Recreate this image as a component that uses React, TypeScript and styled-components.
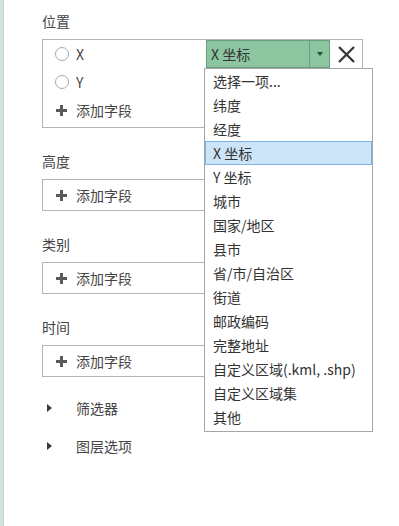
import * as React from 'react';
import styled, { createGlobalStyle } from 'styled-components';

const GlobalStyle = createGlobalStyle`
  html, body {
    margin: 0;
    padding: 0;
    background: #ffffff;
  }
  body {
    font-family: "Noto Sans CJK SC", "Liberation Sans", sans-serif;
    color: #444;
  }
`;

const OPTIONS = [
  '选择一项...',
  '纬度',
  '经度',
  'X 坐标',
  'Y 坐标',
  '城市',
  '国家/地区',
  '县市',
  '省/市/自治区',
  '街道',
  '邮政编码',
  '完整地址',
  '自定义区域(.kml, .shp)',
  '自定义区域集',
  '其他',
];

function PlusIcon() {
  return (
    <svg width="11" height="11" viewBox="0 0 11 11">
      <rect x="4" y="0" width="3" height="11" fill="#5a5a5a" />
      <rect x="0" y="4" width="11" height="3" fill="#5a5a5a" />
    </svg>
  );
}

function CloseIcon() {
  return (
    <svg width="19" height="19" viewBox="0 0 19 19">
      <path d="M2 2 L17 17 M17 2 L2 17" stroke="#3a3a3a" strokeWidth="2.4" />
    </svg>
  );
}

function AddRow() {
  return (
    <Row>
      <IconSlot>
        <PlusIcon />
      </IconSlot>
      <RowText>添加字段</RowText>
    </Row>
  );
}

export default function App() {
  return (
    <Page>
      <GlobalStyle />
      <Strip />
      <Panel>
        <Section>
          <Label>位置</Label>
          <Box>
            <Row>
              <IconSlot>
                <Radio />
              </IconSlot>
              <RowText>X</RowText>
              <Spacer />
              <Combo>
                <ComboValue>X 坐标</ComboValue>
                <ComboArrow>
                  <Caret />
                </ComboArrow>
              </Combo>
              <CloseButton>
                <CloseIcon />
              </CloseButton>
              <DropList>
                {OPTIONS.map((o) => (
                  <DropItem key={o} $active={o === 'X 坐标'}>
                    {o}
                  </DropItem>
                ))}
              </DropList>
            </Row>
            <Row>
              <IconSlot>
                <Radio />
              </IconSlot>
              <RowText>Y</RowText>
            </Row>
            <AddRow />
          </Box>
        </Section>

        <Section>
          <Label>高度</Label>
          <Box $single>
            <AddRow />
          </Box>
        </Section>

        <Section>
          <Label>类别</Label>
          <Box $single>
            <AddRow />
          </Box>
        </Section>

        <Section>
          <Label>时间</Label>
          <Box $single>
            <AddRow />
          </Box>
        </Section>

        <Collapsibles>
          <Toggle>
            <Triangle />
            <ToggleText>筛选器</ToggleText>
          </Toggle>
          <Toggle>
            <Triangle />
            <ToggleText>图层选项</ToggleText>
          </Toggle>
        </Collapsibles>
      </Panel>
    </Page>
  );
}

const Page = styled.div`
  display: flex;
  width: 399px;
  height: 526px;
  overflow: hidden;
  background: #ffffff;
`;

const Strip = styled.div`
  width: 3px;
  flex-shrink: 0;
  background: #d3e2dc;
  border-right: 1px solid #c3d5ce;
`;

const Panel = styled.div`
  display: flex;
  flex-direction: column;
  padding: 11px 0 0 38px;
  width: 321px;
`;

const Section = styled.div`
  display: flex;
  flex-direction: column;
  margin-bottom: 23px;
`;

const Label = styled.div`
  font-size: 14px;
  line-height: 20px;
  height: 20px;
  color: #444;
  margin-bottom: 8px;
`;

const Box = styled.div<{ $single?: boolean }>`
  border: 1px solid #b4b4b4;
  display: flex;
  flex-direction: column;
  padding: ${(p) => (p.$single ? '1px 0 1px' : '0 0 3px')};
  background: #fff;
`;

const Row = styled.div`
  position: relative;
  display: flex;
  align-items: center;
  height: 28px;
`;

const IconSlot = styled.div`
  width: 33px;
  display: flex;
  justify-content: center;
  align-items: center;
  padding-left: 4px;
  box-sizing: border-box;
`;

const Radio = styled.span`
  width: 12px;
  height: 12px;
  border-radius: 50%;
  border: 1px solid #a8a8a8;
  background: #fff;
`;

const RowText = styled.span`
  font-size: 14px;
  color: #444;
`;

const Spacer = styled.div`
  flex: 1;
`;

const Combo = styled.div`
  display: flex;
  height: 28px;
  width: 124px;
  box-sizing: border-box;
  border: 1px solid #6a9e7e;
  background: #8cc6a1;
`;

const ComboValue = styled.div`
  flex: 1;
  font-size: 14px;
  line-height: 26px;
  padding-left: 4px;
  color: #333;
`;

const ComboArrow = styled.div`
  width: 19px;
  border-left: 1px solid #6a9e7e;
  display: flex;
  align-items: center;
  justify-content: center;
`;

const Caret = styled.span`
  width: 0;
  height: 0;
  border-left: 3px solid transparent;
  border-right: 3px solid transparent;
  border-top: 4px solid #2f4a3a;
`;

const CloseButton = styled.div`
  width: 32px;
  height: 28px;
  display: flex;
  align-items: center;
  justify-content: center;
`;

const DropList = styled.ul`
  position: absolute;
  left: 161px;
  top: 28px;
  width: 167px;
  margin: 0;
  padding: 0 0 2px;
  list-style: none;
  border: 1px solid #a6a6a6;
  background: #fff;
  z-index: 2;
`;

const DropItem = styled.li<{ $active?: boolean }>`
  height: 24px;
  line-height: 22px;
  font-size: 14px;
  color: #333;
  padding-left: 7px;
  box-sizing: border-box;
  white-space: nowrap;
  border: 1px solid ${(p) => (p.$active ? '#7fb2e4' : 'transparent')};
  background: ${(p) => (p.$active ? '#cce4f8' : 'transparent')};
`;

const Collapsibles = styled.div`
  display: flex;
  flex-direction: column;
  gap: 18px;
  margin-top: -2px;
`;

const Toggle = styled.div`
  display: flex;
  align-items: center;
  height: 20px;
`;

const Triangle = styled.span`
  width: 0;
  height: 0;
  margin-left: 5px;
  border-top: 4px solid transparent;
  border-bottom: 4px solid transparent;
  border-left: 5px solid #3c3c3c;
`;

const ToggleText = styled.span`
  font-size: 14px;
  color: #444;
  margin-left: 24px;
`;
